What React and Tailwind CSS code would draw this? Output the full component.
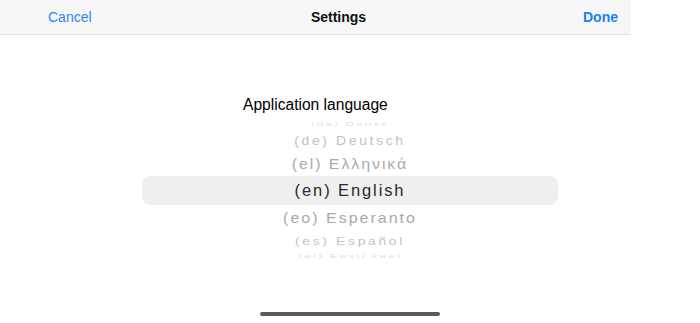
import React from 'react';

const rows = [
    { label: '(da) Dansk', h: 'h-[12px]', text: 'text-[12px] text-[#e2e2e2] tracking-[2px] scale-y-[0.45]' },
    { label: '(de) Deutsch', h: 'h-[21px]', text: 'text-[14px] text-[#c2c2c2] tracking-[2.6px] scale-y-[0.85]' },
    { label: '(el) Ελληνικά', h: 'h-[25px]', text: 'text-[16px] text-[#ababab] tracking-[1.9px] scale-y-[0.92]' },
    { label: '(en) English', h: 'h-[29px]', text: 'text-[16.5px] text-[#2a2a2a] tracking-[1.9px]', selected: true },
    { label: '(eo) Esperanto', h: 'h-[26px]', text: 'text-[16px] text-[#a9a9a9] tracking-[2px] scale-y-[0.92]' },
    { label: '(es) Español', h: 'h-[20px]', text: 'text-[14px] text-[#c4c4c4] tracking-[2.6px] scale-y-[0.8]' },
    { label: '(et) Eesti keel', h: 'h-[10px]', text: 'text-[12px] text-[#e2e2e2] tracking-[2px] scale-y-[0.45]' },
];

const App = () => {
    return (
        <div className="flex flex-col bg-white w-[700px] h-[323px] overflow-hidden font-['Liberation_Sans',Arial,sans-serif]">
            <div className="flex items-center bg-[#f7f7f7] border-[#e2e2e2] border-b w-[631px] h-[35px] text-[14px]">
                <span className="ml-[48px] w-[40px] text-[#2a86f6]">Cancel</span>
                <span className="flex-1 font-semibold text-[#111] text-center pl-[6px]">Settings</span>
                <span className="mr-[13px] font-semibold text-[#1a7ef7]">Done</span>
            </div>

            <p className="mt-[61px] ml-[243px] text-[15.6px] text-black leading-[18px]">
                Application language
            </p>

            <div className="flex flex-col mx-auto mt-[4px] w-[416px]">
                {rows.map((row) => (
                    <div
                        key={row.label}
                        className={`flex justify-center items-center overflow-hidden ${row.h} ${
                            row.selected ? 'bg-[#efefef] rounded-[8px]' : ''
                        }`}
                    >
                        <span className={`whitespace-nowrap leading-none ${row.text}`}>{row.label}</span>
                    </div>
                ))}
            </div>

            <div className="bg-[#5a5a5a] mx-auto mt-auto mb-[7px] rounded-full w-[180px] h-[4px]" />
        </div>
    );
};

export default App;
